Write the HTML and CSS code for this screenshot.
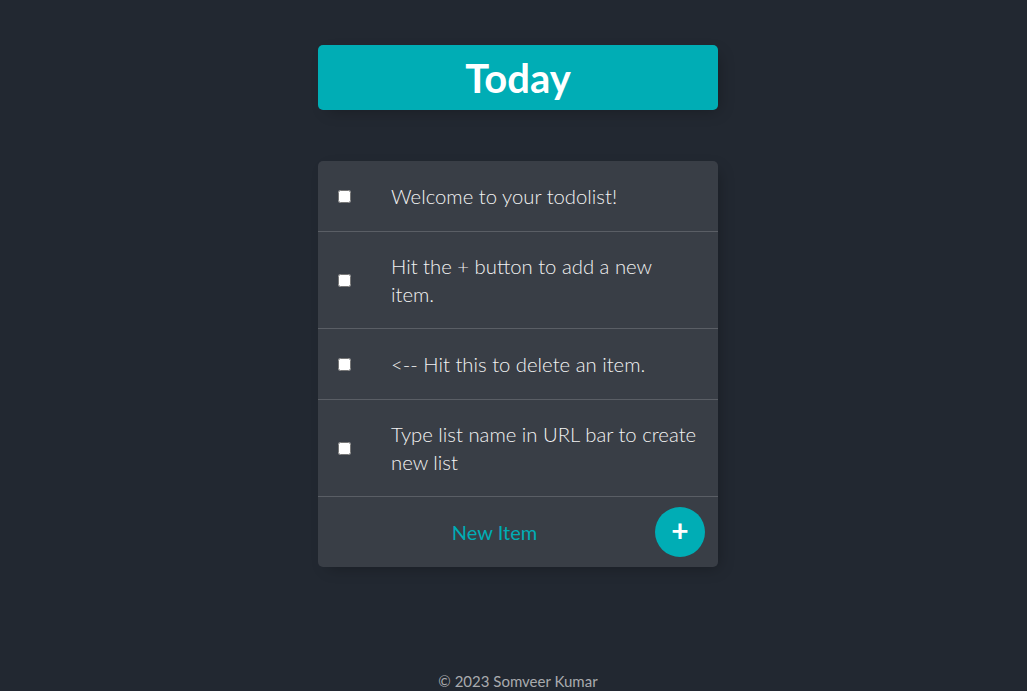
FILE: index.html
```html
<!DOCTYPE html>
<html lang="en">
<head>
<meta charset="utf-8">
<title>To Do List</title>
<link rel="stylesheet" href="styles.css">
</head>
<body>
<div class="page">
  <div class="box heading">
    <h1>Today</h1>
  </div>
  <div class="box list">
    <div class="item"><input type="checkbox"><p>Welcome to your todolist!</p></div>
    <div class="item"><input type="checkbox"><p>Hit the + button to add a new item.</p></div>
    <div class="item"><input type="checkbox"><p>&lt;-- Hit this to delete an item.</p></div>
    <div class="item"><input type="checkbox"><p>Type list name in URL bar to create new list</p></div>
    <form class="item new-item">
      <input type="text" class="new-input" placeholder="New Item">
      <button type="button" class="add-btn">+</button>
    </form>
  </div>
  <footer class="footer">© 2023 Somveer Kumar</footer>
</div>
</body>
</html>
```
FILE: styles.css
```css
html, body {
  margin: 0;
  background: #222831;
  font-family: Lato, "Open Sans", sans-serif;
  overflow: hidden;
}
.page {
  padding: 45px 0 0 9px;
  height: 646px;
}
.box {
  width: 400px;
  margin: 0 auto;
  border-radius: 5px;
  box-shadow: 5px 5px 15px -5px rgba(0, 0, 0, 0.3);
}
.heading {
  background: #00ADB5;
  height: 65px;
  display: flex;
  align-items: center;
  justify-content: center;
}
.heading h1 {
  margin: 0;
  color: #fff;
  font-size: 40px;
  font-weight: 700;
  line-height: 1;
}
.list {
  margin-top: 51px;
  background: #393E46;
}
.item {
  min-height: 70px;
  display: flex;
  align-items: center;
  border-bottom: 1px solid #5a5e65;
}
.item:last-child {
  border-bottom: 0;
}
.item input[type="checkbox"] {
  margin: 20px;
  width: 13px;
  height: 13px;
  flex: none;
}
.item p {
  margin: 0;
  padding: 20px;
  font-size: 20.3px;
  line-height: 28px;
  font-weight: 300;
  color: #F2F2F2;
}
.new-item {
  margin: 0;
}
.new-input {
  margin-left: 20px;
  width: 313px;
  height: 60px;
  border: none;
  background: transparent;
  text-align: center;
  font-family: inherit;
  font-size: 20px;
  font-weight: 400;
  color: #EEEEEE;
  padding: 0;
  outline: none;
}
.new-input::placeholder {
  color: #00ADB5;
  opacity: 1;
}
.add-btn {
  margin-left: 4px;
  width: 50px;
  height: 50px;
  border-radius: 50%;
  border: 0;
  background: #00ADB5;
  color: #fff;
  font-family: inherit;
  font-size: 30px;
  font-weight: 700;
  line-height: 1;
  padding: 0 0 4px;
}
.footer {
  margin-top: 104px;
  text-align: center;
  color: #a9abae;
  font-size: 15px;
  line-height: 20px;
}
```
